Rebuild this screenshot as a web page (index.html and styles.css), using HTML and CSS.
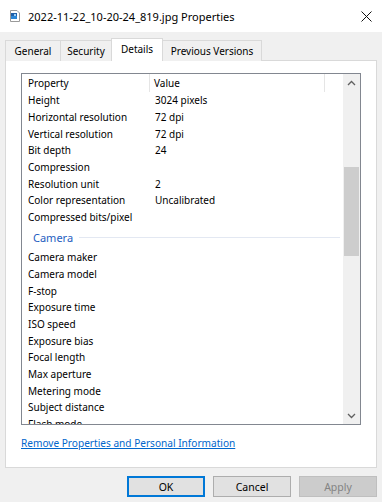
FILE: index.html
```html
<!DOCTYPE html>
<html>
<head>
<meta charset="utf-8">
<link rel="stylesheet" href="styles.css">
</head>
<body>
<div class="window">
  <div class="titlebar">
    <svg class="fileicon" width="10" height="12" viewBox="0 0 10 12">
      <path d="M0.5 0.5 H7 L9.5 3 V11.5 H0.5 Z" fill="#fff" stroke="#9a9a9a"/>
      <rect x="1" y="3" width="6" height="6" fill="#1f5fa8"/>
      <rect x="1" y="6" width="6" height="3" fill="#2b86d6"/>
      <rect x="4" y="4" width="2" height="2" fill="#9fd0f5"/>
    </svg>
    <span class="title">2022-11-22_10-20-24_819.jpg Properties</span>
    <svg class="close" width="11" height="11" viewBox="0 0 11 11">
      <path d="M0.5 0.5 L10.5 10.5 M10.5 0.5 L0.5 10.5" stroke="#111" stroke-width="1"/>
    </svg>
  </div>
  <div class="body">
    <div class="tabs">
      <div class="tab t-general">General</div>
      <div class="tab t-security">Security</div>
      <div class="tab t-details active">Details</div>
      <div class="tab t-prev">Previous Versions</div>
    </div>
    <div class="panel">
      <div class="listbox">
        <div class="listcontent">
          <div class="header">
            <div class="hcell c1">Property</div>
            <div class="hcell c2">Value</div>
            <div class="hcell c3"></div>
          </div>
          <div class="row"><span class="c1">Height</span><span class="c2">3024 pixels</span></div>
          <div class="row"><span class="c1">Horizontal resolution</span><span class="c2">72 dpi</span></div>
          <div class="row"><span class="c1">Vertical resolution</span><span class="c2">72 dpi</span></div>
          <div class="row"><span class="c1">Bit depth</span><span class="c2">24</span></div>
          <div class="row"><span class="c1">Compression</span><span class="c2"></span></div>
          <div class="row"><span class="c1">Resolution unit</span><span class="c2">2</span></div>
          <div class="row"><span class="c1">Color representation</span><span class="c2">Uncalibrated</span></div>
          <div class="row"><span class="c1">Compressed bits/pixel</span><span class="c2"></span></div>
          <div class="group"><span class="gname">Camera</span><span class="gline"></span></div>
          <div class="row"><span class="c1">Camera maker</span><span class="c2"></span></div>
          <div class="row"><span class="c1">Camera model</span><span class="c2"></span></div>
          <div class="row"><span class="c1">F-stop</span><span class="c2"></span></div>
          <div class="row"><span class="c1">Exposure time</span><span class="c2"></span></div>
          <div class="row"><span class="c1">ISO speed</span><span class="c2"></span></div>
          <div class="row"><span class="c1">Exposure bias</span><span class="c2"></span></div>
          <div class="row"><span class="c1">Focal length</span><span class="c2"></span></div>
          <div class="row"><span class="c1">Max aperture</span><span class="c2"></span></div>
          <div class="row"><span class="c1">Metering mode</span><span class="c2"></span></div>
          <div class="row"><span class="c1">Subject distance</span><span class="c2"></span></div>
          <div class="row"><span class="c1">Flash mode</span><span class="c2"></span></div>
        </div>
        <div class="scrollbar">
          <div class="arrow">
            <svg width="9" height="6" viewBox="0 0 9 6"><path d="M1 5 L4.5 1.5 L8 5" fill="none" stroke="#606060" stroke-width="1.3"/></svg>
          </div>
          <div class="track">
            <div class="thumb"></div>
          </div>
          <div class="arrow">
            <svg width="9" height="6" viewBox="0 0 9 6"><path d="M1 1 L4.5 4.5 L8 1" fill="none" stroke="#606060" stroke-width="1.3"/></svg>
          </div>
        </div>
      </div>
      <a class="link" href="#">Remove Properties and Personal Information</a>
    </div>
    <div class="buttons">
      <button class="btn default">OK</button>
      <button class="btn">Cancel</button>
      <button class="btn disabled">Apply</button>
    </div>
  </div>
</div>
</body>
</html>
```
FILE: styles.css
```css
* { box-sizing: border-box; }
html, body { margin: 0; padding: 0; }
body {
  width: 382px;
  height: 502px;
  overflow: hidden;
  font-family: "Noto Sans", "Open Sans", sans-serif;
  font-size: 10px;
  color: #000;
  background: #f0f0f0;
}
.window { width: 382px; height: 502px; display: flex; flex-direction: column; }
.titlebar {
  height: 32px;
  background: #fff;
  display: flex;
  align-items: center;
  padding-left: 10px;
  padding-right: 10px;
}
.title { font-size: 11px; margin-left: 8px; flex: 1; }
.body { flex: 1; display: flex; flex-direction: column; padding: 6px 5px 0 5px; }
.tabs { display: flex; align-items: flex-end; height: 22px; }
.tab {
  height: 21px;
  border: 1px solid #d9d9d9;
  border-bottom: none;
  background: #f0f0f0;
  display: flex;
  align-items: center;
  justify-content: center;
  color: #000;
  margin-right: -1px;
  margin-bottom: -1px;
  position: relative;
}
.t-general { width: 56px; }
.t-security { width: 52px; }
.t-details { width: 52px; }
.t-prev { width: 100px; }
.tab.active {
  height: 23px;
  background: #fff;
  z-index: 2;
  padding-bottom: 2px;
}
.panel {
  height: 408px;
  background: #fff;
  border: 1px solid #d9d9d9;
  display: flex;
  flex-direction: column;
  padding: 12px 15px 0 15px;
}
.listbox {
  height: 352px;
  width: 340px;
  border: 1px solid #828790;
  display: flex;
  overflow: hidden;
}
.listcontent { flex: 1; overflow: hidden; }
.header { display: flex; height: 18px; }
.hcell { display: flex; align-items: center; }
.header .c1 { width: 128px; padding-left: 6px; border-right: 1px solid #e5e5e5; }
.header .c2 { width: 175px; padding-left: 4px; border-right: 1px solid #e5e5e5; }
.row { display: flex; height: 16.7px; align-items: center; }
.row .c1 { width: 128px; padding-left: 6px; white-space: nowrap; }
.row .c2 { padding-left: 5px; white-space: nowrap; }
.group { height: 23.4px; display: flex; align-items: center; padding-left: 11px; }
.gname { color: #1e5ebf; font-size: 11px; }
.gline { flex: 1; height: 1px; background: #e3e8f2; margin-left: 6px; margin-right: 3px; margin-top: 1px; }
.scrollbar {
  width: 17px;
  background: #f0f0f0;
  display: flex;
  flex-direction: column;
}
.arrow { height: 17px; display: flex; align-items: center; justify-content: center; }
.track { flex: 1; padding: 76px 1px 0 1px; }
.thumb { height: 89px; background: #cdcdcd; }
.link {
  margin-top: 11px;
  color: #0066cc;
  text-decoration: underline;
  font-size: 10.1px;
  align-self: flex-start;
}
.buttons { display: flex; justify-content: flex-end; gap: 8px; padding-top: 8px; }
.btn {
  width: 78px;
  height: 21px;
  font-family: "Noto Sans", "Open Sans", sans-serif;
  font-size: 10.5px;
  background: #e1e1e1;
  border: 1px solid #adadad;
  color: #000;
  padding: 0;
  margin: 0;
}
.btn.default { border: 2px solid #0078d7; }
.btn.disabled { background: #cccccc; border-color: #bfbfbf; color: #838383; }
```
